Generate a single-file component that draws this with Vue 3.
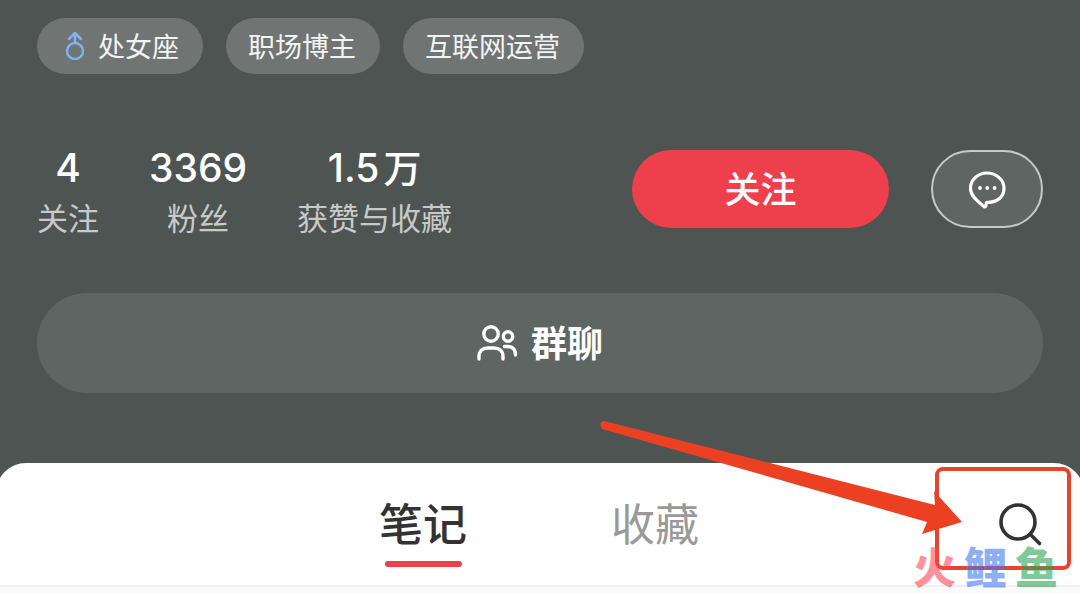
<script setup>
const tags = [
  { text: '处女座', male: true },
  { text: '职场博主' },
  { text: '互联网运营' },
]
const stats = [
  { value: '4', label: '关注' },
  { value: '3369', label: '粉丝' },
  { value: '1.5', unit: '万', label: '获赞与收藏' },
]
const watermark = ['火', '鲤', '鱼']
</script>

<template>
  <main class="page">
    <section class="profile">
      <ul class="tags">
        <li v-for="tag in tags" :key="tag.text" class="tag">
          <svg v-if="tag.male" class="male" width="20" height="30" viewBox="0 0 20 30" aria-hidden="true">
            <circle cx="10" cy="21" r="8" />
            <path d="M10 13V3M4 9l6-6 6 6" />
          </svg>
          <span>{{ tag.text }}</span>
        </li>
      </ul>

      <div class="summary">
        <ul class="stats">
          <li v-for="stat in stats" :key="stat.label" class="stat">
            <span class="value">{{ stat.value }}<span v-if="stat.unit" class="unit">{{ stat.unit }}</span></span>
            <span class="label">{{ stat.label }}</span>
          </li>
        </ul>
        <div class="actions">
          <button class="follow" type="button">关注</button>
          <button class="message" type="button" aria-label="私信">
            <svg width="40" height="40" viewBox="0 0 40 40" aria-hidden="true">
              <path class="bubble" d="M17 37.500C12 33.500 3.500 27.500 3.500 19.500C3.500 10.500 11 4 20 4S37 10.500 37 19.500S29.500 33.500 19.500 33.500L18.800 37Q18 38.500 17 37.500Z" />
              <circle cx="13" cy="19" r="1.900" />
              <circle cx="20.300" cy="19" r="1.900" />
              <circle cx="27.600" cy="19" r="1.900" />
            </svg>
          </button>
        </div>
      </div>

      <button class="group" type="button">
        <svg width="42" height="40" viewBox="0 0 42 40" aria-hidden="true">
          <circle cx="14" cy="13" r="7.200" />
          <circle cx="31" cy="15.500" r="4.700" />
          <path d="M2 38V35.500C2 30 5.500 27 10.500 27H17C22.500 27 26 30 26 35.500V38" />
          <path d="M27.500 25.500H30.500C35.500 25.500 38.500 28.500 38.500 34" />
        </svg>
        <span>群聊</span>
      </button>
    </section>

    <section class="sheet">
      <nav class="tabs">
        <a class="tab active" href="#notes">笔记</a>
        <a class="tab" href="#saved">收藏</a>
      </nav>
      <button class="search" type="button" aria-label="搜索">
        <svg width="46" height="46" viewBox="0 0 46 46" aria-hidden="true">
          <circle cx="21" cy="21" r="17" />
          <path d="M33 33L42.500 42.500" />
        </svg>
      </button>
      <div class="frame"></div>
      <svg class="arrow" width="364" height="120" viewBox="0 0 364 120" aria-hidden="true">
        <path d="M5 1L336 85L335 71L363 102L323 114L328 102L3 9Q-1 2 5 1Z" />
      </svg>
      <div class="watermark">
        <span v-for="(glyph, i) in watermark" :key="glyph" :class="'hue-' + i">{{ glyph }}</span>
      </div>
    </section>
    <div class="feed"></div>
  </main>
</template>

<style>
body {
  margin: 0;
}
</style>

<style scoped>
.page {
  display: flex;
  flex-direction: column;
  min-height: 100vh;
  overflow: hidden;
  background: #4e5451;
  color: #fff;
  font-family: Inter, "Noto Sans CJK SC", sans-serif;
}

ul {
  margin: 0;
  padding: 0;
  list-style: none;
}

button {
  padding: 0;
  border: 0;
  background: none;
  color: inherit;
  font-family: inherit;
}

svg {
  display: block;
  fill: none;
  stroke-linecap: round;
  stroke-linejoin: round;
}

.profile {
  padding: 18px 37px 70px;
}

.tags {
  display: flex;
  gap: 23px;
}

.tag {
  display: flex;
  align-items: center;
  gap: 13px;
  height: 56px;
  box-sizing: border-box;
  padding: 0 24px 2px 22px;
  border-radius: 28px;
  background: #707472;
  color: #f2f4f3;
  font-size: 27px;
}

.male {
  margin-left: 6px;
  stroke: #82b0f0;
  stroke-width: 2.5;
}

.summary {
  display: flex;
  align-items: flex-start;
  justify-content: space-between;
  margin-top: 70px;
}

.stats {
  display: flex;
  gap: 50px;
}

.stat {
  display: flex;
  flex-direction: column;
  align-items: center;
}

.value {
  font-size: 39px;
  font-weight: 500;
  line-height: 48px;
}

.unit {
  margin-left: 4px;
  font-size: 38px;
  line-height: 40px;
}

.label {
  color: #c8cac9;
  font-size: 31px;
  line-height: 54px;
}

.actions {
  display: flex;
  gap: 42px;
  margin-top: 6px;
}

.follow {
  width: 257px;
  height: 78px;
  padding-bottom: 4px;
  border-radius: 39px;
  background: #ed3f4c;
  font-size: 36px;
  font-weight: 500;
}

.message {
  display: flex;
  align-items: center;
  justify-content: center;
  width: 112px;
  height: 78px;
  border: 2px solid #c6c9c8;
  border-radius: 39px;
  background: #5f6562;
}

.message svg {
  fill: #fff;
}

.message .bubble {
  fill: none;
  stroke: #fff;
  stroke-width: 3.2;
}

.group {
  display: flex;
  align-items: center;
  justify-content: center;
  gap: 12px;
  width: 100%;
  height: 100px;
  margin-top: 47px;
  padding-bottom: 4px;
  border-radius: 50px;
  background: #5f6562;
  font-size: 36px;
  font-weight: 700;
}

.group svg {
  stroke: #fff;
  stroke-width: 3.4;
}

.sheet {
  position: relative;
  display: flex;
  justify-content: center;
  margin: 0 -4px;
  padding-right: 2px;
  border-bottom: 2px solid #f0f0f0;
  border-radius: 30px 30px 0 0;
  background: #fff;
}

.tabs {
  display: flex;
  gap: 144px;
}

.tab {
  display: flex;
  flex-direction: column;
  align-items: center;
  height: 122px;
  box-sizing: border-box;
  padding-top: 30px;
  color: #999;
  font-size: 44px;
  line-height: 64px;
  text-decoration: none;
}

.tab.active {
  color: #333;
  font-weight: 500;
}

.tab.active::after {
  width: 77px;
  height: 6px;
  margin-top: 4px;
  border-radius: 3px;
  background: #ed4149;
  content: "";
}

.search {
  position: absolute;
  top: 38px;
  right: 41px;
}

.search svg {
  stroke: #333;
  stroke-width: 3.6;
}

.frame {
  position: absolute;
  top: 4px;
  right: 13px;
  width: 128px;
  height: 95px;
  border: 4px solid #e8432c;
  border-radius: 8px;
}

.arrow {
  position: absolute;
  top: -43px;
  right: 121px;
  fill: #ec4023;
}

.watermark {
  position: absolute;
  top: 84px;
  right: 26px;
  display: flex;
  gap: 8px;
  font-size: 43px;
  font-weight: 900;
  line-height: 43px;
}

.hue-0 {
  color: rgba(255, 70, 85, 0.6);
}

.hue-1 {
  color: rgba(65, 120, 240, 0.6);
}

.hue-2 {
  color: rgba(45, 165, 85, 0.6);
}

.feed {
  flex: 1;
  background: #fafafa;
}
</style>
